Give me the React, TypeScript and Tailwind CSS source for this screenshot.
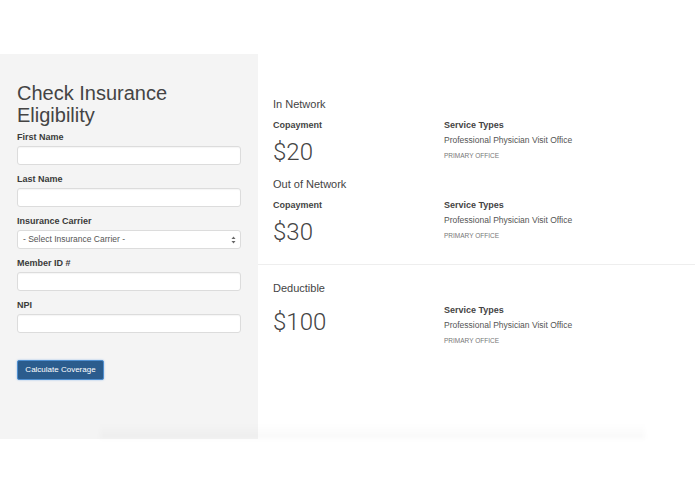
import React from "react";

const FIELDS = ["First Name", "Last Name", "Insurance Carrier", "Member ID #", "NPI"];

const Field: React.FC<{ label: string }> = ({ label }) => (
  <div className="mb-[8px]">
    <label className="block text-[9px] leading-[12px] font-bold text-[#3a3a3a] mb-[3px]">{label}</label>
    {label === "Insurance Carrier" ? (
      <div className="h-[19px] flex items-center justify-between bg-white border border-[#dcdcdc] rounded-[3px] pl-[5px] pr-[4px]">
        <span className="text-[8.5px] text-[#555]">- Select Insurance Carrier -</span>
        <svg width="5" height="8" viewBox="0 0 5 8">
          <path d="M2.5 0.5 L4.5 3 L0.5 3 Z" fill="#666" />
          <path d="M2.5 7.5 L4.5 5 L0.5 5 Z" fill="#666" />
        </svg>
      </div>
    ) : (
      <div className="h-[19px] bg-white border border-[#dcdcdc] rounded-[3px] shadow-[inset_0_1px_1px_rgba(0,0,0,0.04)]" />
    )}
  </div>
);

const ServiceTypes: React.FC = () => (
  <div>
    <div className="text-[9px] leading-[12px] font-bold text-[#444]">Service Types</div>
    <div className="mt-[3px] text-[8.5px] leading-[12px] text-[#555]">Professional Physician Visit Office</div>
    <div className="mt-[5px] text-[6.5px] leading-[10px] uppercase text-[#777]">Primary Office</div>
  </div>
);

const Amount: React.FC<{ value: string; className?: string }> = ({ value, className = "" }) => (
  <div className={`text-[24px] leading-[28px] font-light text-[#444] font-['Roboto',sans-serif] ${className}`}>{value}</div>
);

const Network: React.FC<{ title: string; amount: string }> = ({ title, amount }) => (
  <div>
    <h3 className="text-[11px] leading-[14px] text-[#444]">{title}</h3>
    <div className="mt-[8px] grid grid-cols-[171px_1fr]">
      <div>
        <div className="text-[9px] leading-[12px] font-bold text-[#444]">Copayment</div>
        <Amount value={amount} className="mt-[7px]" />
      </div>
      <ServiceTypes />
    </div>
  </div>
);

export default function App() {
  return (
    <div className="w-[695px] h-[494px] bg-white font-['Liberation_Sans',Arial,sans-serif]">
      <div className="h-[54px]" />
      <div className="relative flex h-[385px]">
        <div className="w-[258px] bg-[#f4f4f4] px-[17px] pt-[28px]">
          <h1 className="text-[20px] leading-[22px] text-[#444] mb-[5px]">Check Insurance Eligibility</h1>
          {FIELDS.map((f) => (
            <Field key={f} label={f} />
          ))}
          <button className="mt-[19px] h-[20px] w-[87px] bg-[#2b5c8d] border border-[#4f8fd0] rounded-[2px] text-white text-[8px] shadow-[0_0_2px_rgba(80,150,230,0.6)]">
            Calculate Coverage
          </button>
        </div>
        <div className="flex-1">
          <div className="px-[15px] pt-[43px] pb-[18px] border-b border-[#eeeeee]">
            <Network title="In Network" amount="$20" />
            <div className="mt-[11px]">
              <Network title="Out of Network" amount="$30" />
            </div>
          </div>
          <div className="px-[15px] pt-[16px]">
            <h3 className="text-[11px] leading-[14px] text-[#444]">Deductible</h3>
            <div className="mt-[9px] grid grid-cols-[171px_1fr]">
              <Amount value="$100" className="mt-[4px]" />
              <ServiceTypes />
            </div>
          </div>
        </div>
        <div className="absolute bottom-0 left-[100px] right-[50px] h-[16px] bg-gradient-to-b from-transparent to-black/[0.025] blur-[2px]" />
      </div>
    </div>
  );
}
